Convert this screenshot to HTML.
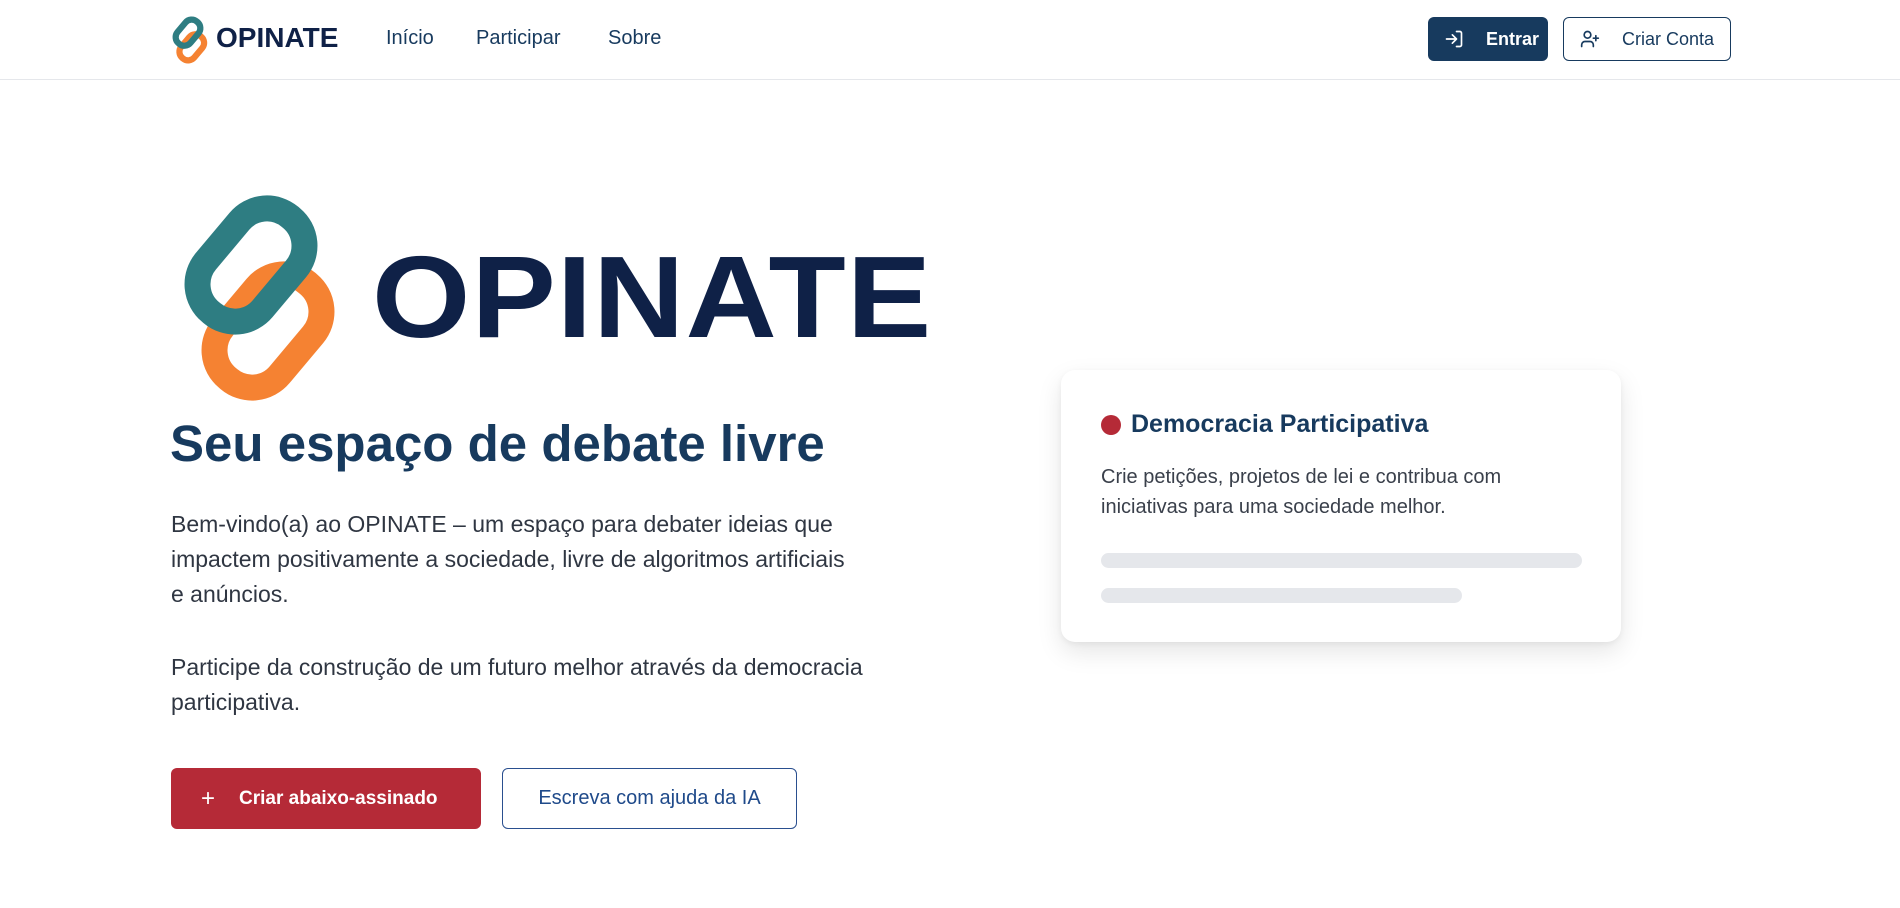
<!DOCTYPE html>
<html><head><meta charset="utf-8"><style>
*{margin:0;padding:0;box-sizing:border-box}
body{width:1900px;height:908px;background:#fff;font-family:"Liberation Sans",Arial,sans-serif;position:relative;overflow:hidden}
.hdr{position:absolute;left:0;top:0;width:1900px;height:80px;border-bottom:1px solid #e5e7eb}
.a{position:absolute}
.nav{font-size:20px;color:#173a5e;top:27px}
.btn{position:absolute;border-radius:6px;font-size:18px;font-weight:bold;display:flex;align-items:center}
p.t{color:#2f3642;font-size:23px;line-height:35px;white-space:nowrap}
</style></head><body>
<div class="hdr">
<svg class="a" style="left:170px;top:14px" width="40" height="52" viewBox="0 0 180 220">
<g transform="translate(98 143) rotate(-50)"><rect x="-64" y="-38" width="128" height="76" rx="36" fill="none" stroke="#f58232" stroke-width="28"/></g>
<g transform="translate(81 77) rotate(-50)"><rect x="-64" y="-38" width="128" height="76" rx="36" fill="none" stroke="#2e7d82" stroke-width="28"/></g>
</svg>
<div class="a" style="left:216px;top:22px;font-size:28px;font-weight:bold;color:#0f2147">OPINATE</div>
<div class="a nav" style="left:386px">Início</div>
<div class="a nav" style="left:476px">Participar</div>
<div class="a nav" style="left:608px">Sobre</div>
<div class="btn" style="left:1428px;top:17px;width:120px;height:44px;background:#173a5e;color:#fff;padding-left:16px">
<svg width="20" height="20" viewBox="0 0 24 24" fill="none" stroke="#fff" stroke-width="2" stroke-linecap="round" stroke-linejoin="round"><path d="M15 3h4a2 2 0 0 1 2 2v14a2 2 0 0 1-2 2h-4M10 17l5-5-5-5M15 12H3"/></svg>
<span style="margin-left:22px;font-size:18px">Entrar</span></div>
<div class="btn" style="left:1563px;top:17px;width:168px;height:44px;border:1.5px solid #173a5e;color:#173a5e;padding-left:16px;font-weight:normal">
<svg width="20" height="20" viewBox="0 0 24 24" fill="none" stroke="#173a5e" stroke-width="2" stroke-linecap="round" stroke-linejoin="round"><path d="M16 21v-2a4 4 0 0 0-4-4H6a4 4 0 0 0-4 4v2"/><circle cx="9" cy="7" r="4"/><path d="M19 8v6M22 11h-6"/></svg>
<span style="margin-left:22px">Criar Conta</span></div>
</div>

<svg class="a" style="left:170px;top:188px" width="180" height="220" viewBox="0 0 180 220">
<g transform="translate(98 143) rotate(-50)"><rect x="-62" y="-37" width="124" height="74" rx="36" fill="none" stroke="#f58232" stroke-width="26"/></g>
<g transform="translate(81 77) rotate(-50)"><rect x="-62" y="-37" width="124" height="74" rx="36" fill="none" stroke="#2e7d82" stroke-width="26"/></g>
</svg>
<div class="a" style="left:372px;top:232px;font-size:116px;font-weight:bold;color:#0f2147;line-height:130px;letter-spacing:1px;transform:scaleX(1.09);transform-origin:0 0">OPINATE</div>

<div class="a" style="left:170px;top:414px;font-size:51px;font-weight:bold;color:#173a5e">Seu espaço de debate livre</div>
<p class="t a" style="left:171px;top:507px">Bem-vindo(a) ao OPINATE – um espaço para debater ideias que<br>impactem positivamente a sociedade, livre de algoritmos artificiais<br>e anúncios.</p>
<p class="t a" style="left:171px;top:650px">Participe da construção de um futuro melhor através da democracia<br>participativa.</p>

<div class="btn" style="left:171px;top:768px;width:310px;height:61px;background:#b52a37;color:#fff;padding-left:30px;font-weight:bold;font-size:19px"><span style="font-size:24px;font-weight:normal;margin-right:24px">+</span>Criar abaixo-assinado</div>
<div class="btn" style="left:502px;top:768px;width:295px;height:61px;border:1.5px solid #2a4f8f;color:#1f4a8a;justify-content:center;font-weight:normal;font-size:20px">Escreva com ajuda da IA</div>

<div class="a" style="left:1061px;top:370px;width:560px;height:272px;background:#fff;border-radius:14px;box-shadow:0 10px 25px rgba(0,0,0,.10),0 2px 6px rgba(0,0,0,.05)">
<div class="a" style="left:40px;top:45px;width:20px;height:20px;border-radius:50%;background:#b52a37"></div>
<div class="a" style="left:70px;top:40px;font-size:25px;font-weight:bold;color:#173a5e">Democracia Participativa</div>
<p class="a" style="left:40px;top:92px;width:480px;font-size:20px;line-height:30px;color:#3a404b">Crie petições, projetos de lei e contribua com iniciativas para uma sociedade melhor.</p>
<div class="a" style="left:40px;top:183px;width:481px;height:15px;border-radius:8px;background:#e5e7eb"></div>
<div class="a" style="left:40px;top:218px;width:361px;height:15px;border-radius:8px;background:#e5e7eb"></div>
</div>
</body></html>
